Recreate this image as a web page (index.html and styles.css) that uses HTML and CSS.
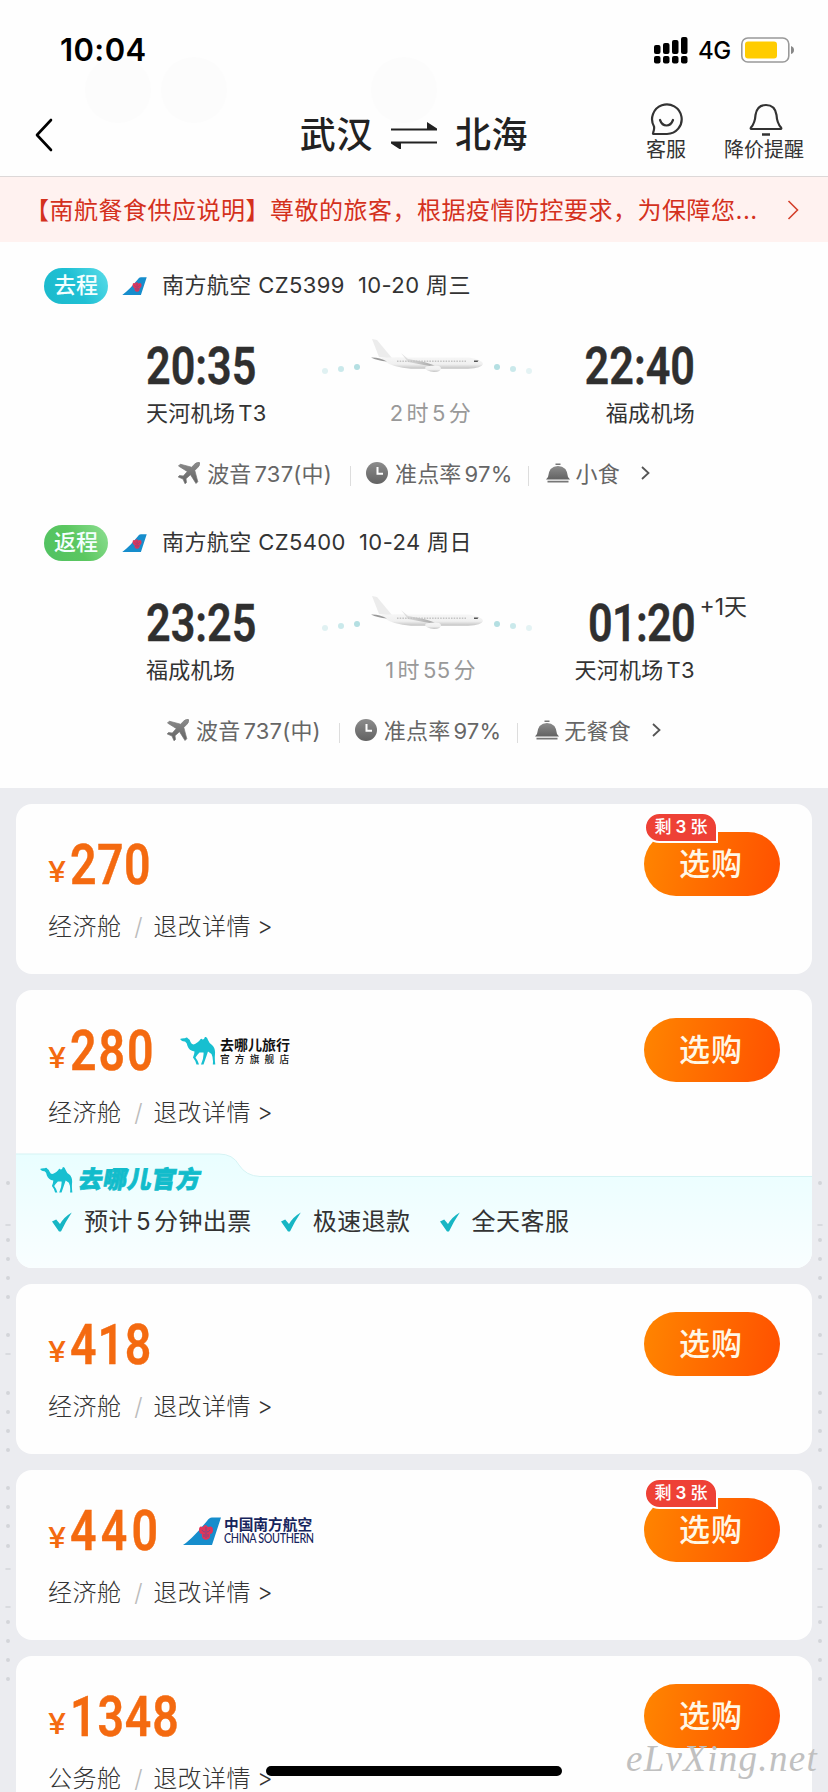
FILE: index.html
```html
<!DOCTYPE html>
<html lang="zh-CN">
<head>
<meta charset="utf-8">
<title>武汉 ⇌ 北海</title>
<link rel="stylesheet" href="styles.css">
</head>
<body>
<svg class="defs" width="0" height="0" aria-hidden="true">
  <defs>
    <linearGradient id="grey" x1="0" y1="0" x2="0" y2="1"><stop offset="0" stop-color="#8c8c8c"/><stop offset="1" stop-color="#626262"/></linearGradient>
    <linearGradient id="hull" x1="0" y1="0" x2="0" y2="1"><stop offset="0" stop-color="#f6f6f6"/><stop offset=".6" stop-color="#f0f0f0"/><stop offset="1" stop-color="#c2c2c2"/></linearGradient>
    <linearGradient id="wing" x1="0" y1="0" x2="1" y2="0"><stop offset="0" stop-color="#e8e8e8"/><stop offset="1" stop-color="#a2a2a2"/></linearGradient>
    <symbol id="tail" viewBox="0 0 38 28">
      <path d="M0 28C9 22 17 12 24 4Q26 .5 29 .5H38L29 28Z" fill="#168dcc"/>
      <path d="M16 13Q16 8 20 10Q22 6 25 10Q30 8 30 13Q30 17 27 17Q28 22 23 23Q18 22 19 17Q16 17 16 13Z" fill="#e0355a"/>
      <path d="M19 13Q20 15 22 15M27 13Q26 15 24 15M23 10V21M21 17V20M25 17V20" fill="none" stroke="#7b4a86" stroke-width="1"/>
    </symbol>
    <symbol id="camel" viewBox="0 0 36 28">
      <path d="M0 2Q2 1 5 1.2Q7-.2 8 1.6Q10 2.5 10.500 5Q12 8.500 15 7Q18 5.500 20 3Q21 1 22.500 2.500Q24 3 25-.2Q27-.2 28 3Q29 6 32 8Q35.500 11 35 17Q34.500 22 35.300 27.500H32.800Q33.500 21 31.500 17L28 14.500Q26.500 19 23.500 27.500H21Q24 21 23.500 15.500H19.500Q17 18 15.500 20.500Q17.500 23 19 27.500H16.500Q15.500 23.500 13 20.500Q14.500 17 14.500 14.500Q9 13.500 7.500 9Q7 5.500 5 4.500Q2 4.800 0 2Z" fill="#17bfd0"/>
    </symbol>
    <symbol id="check" viewBox="0 0 20 20">
      <path d="M0 9.500L4.200 7.500L8 12Q12 5 19.800 .5Q14 9 9 19.500H7Z" fill="#17b6c4"/>
    </symbol>
    <symbol id="jet" viewBox="0 0 22 22">
      <path d="M21.500 .6Q19.500-.4 17 1.800L13.600 5.200L2.300 2.200L.5 4L9.300 9.500L5.300 14L1.500 13.500L.2 15L5 17L7 21.800L8.500 20.500L8 16.700L12.500 12.700L18 21.500L19.800 19.700L16.800 8.400L20.200 5Q22.500 2.500 21.500 .6Z" fill="url(#grey)" stroke="#777" stroke-width=".7"/>
    </symbol>
    <symbol id="clock" viewBox="0 0 22 22">
      <circle cx="11" cy="11" r="11" fill="url(#grey)"/><path d="M11.500 5V11.700H17" fill="none" stroke="#fff" stroke-width="2"/>
    </symbol>
    <symbol id="dish" viewBox="0 0 24 20">
      <path d="M9.500 1.200H14.500M1.500 18.600H22.500" stroke="#777" stroke-width="1.600"/><path d="M2 14Q3 3 12 3Q21 3 22 14L24 16.500H0Z" fill="url(#grey)"/>
    </symbol>
    <symbol id="airliner" viewBox="0 0 230 60">
      <g fill="#b4dfe2"><circle cx="14" cy="46" r="3" opacity=".4"/><circle cx="30" cy="44" r="3" opacity=".7"/><circle cx="46" cy="42" r="3"/><circle cx="186" cy="42" r="3"/><circle cx="202" cy="44" r="3" opacity=".7"/><circle cx="218" cy="46" r="3" opacity=".35"/></g>
      <path d="M61 14L66 15L81 33H76L68 32Z" fill="#ececec"/>
      <path d="M70 33Q82 32 96 32.500H158Q172 35 172 39Q171 43 157 43.800H100Q82 42.500 73 36Z" fill="url(#hull)"/>
      <path d="M60 32.500Q68 32 76 36.500Q66 35.500 60 32.500Z" fill="#999"/>
      <path d="M90 28L97 37Q112 40 125 42Q124 40 113 37L97 34Z" fill="url(#wing)"/>
      <path d="M86 36.300H156" stroke="#c4c4c4" stroke-width="1.500" stroke-dasharray="1.500 1.200"/>
      <path d="M115 41.500Q129 39 130 43Q130 47 123 47Q115 46 114 43Z" fill="url(#hull)"/>
      <path d="M163 35.500H167.500L166.500 37H163Z" fill="#555"/>
    </symbol>
  </defs>
</svg>
<div class="screen">
  <header class="top">
    <div class="status">
      <span class="clock">10:04</span>
      <div class="status-right">
        <svg width="34" height="27" viewBox="0 0 34 27"><rect y="8" width="6.500" height="9" rx="2"/><rect x="9" y="6" width="6.500" height="11" rx="2"/><rect x="18" y="3" width="6.500" height="14" rx="2"/><rect x="27" width="6.500" height="17" rx="2"/><rect y="19" width="6.500" height="7.500" rx="2"/><rect x="9" y="19" width="6.500" height="7.500" rx="2"/><rect x="18" y="19" width="6.500" height="7.500" rx="2"/><rect x="27" y="19" width="6.500" height="7.500" rx="2"/></svg>
        <span class="net">4G</span>
        <svg width="54" height="26" viewBox="0 0 54 26"><rect x=".8" y="1" width="47" height="24" rx="6" fill="none" stroke="#999" stroke-width="1.600"/><rect x="4" y="4.500" width="32" height="17" rx="3" fill="#fc0"/><path d="M50 9Q53 10 53 13Q53 16 50 17Z" fill="#888"/></svg>
      </div>
    </div>
    <div class="nav">
      <svg class="back" width="18" height="34" viewBox="0 0 18 34"><path d="M16 2L2 17L16 32" fill="none" stroke="#000" stroke-width="2.600" stroke-linecap="round" stroke-linejoin="round"/></svg>
      <div class="route"><span>武汉</span><svg width="48" height="28" viewBox="0 0 48 28"><path d="M1 7.500H37V1L47 7.500V9.500H1ZM47 22.500H11V29L1 22.500V20.500H47Z" fill="#222"/></svg><span>北海</span></div>
      <div class="actions">
        <div class="action"><svg width="34" height="33" viewBox="0 0 34 33"><path d="M5 23.500A14.800 14.800 0 1 1 18 31H5Q3.500 31 4.200 29.500Q5.500 26 5 23.500Z" fill="none" stroke="#333" stroke-width="2.200"/><path d="M11 17Q13 22.500 17.500 22.500Q22 22.500 24 17" fill="none" stroke="#333" stroke-width="2.200" stroke-linecap="round"/></svg><span>客服</span></div>
        <div class="action alert"><svg width="34" height="33" viewBox="0 0 34 33"><path d="M3 26Q1 26 2 24.500Q6 20 6.500 12Q8 2 17 2Q26 2 27.500 12Q28 20 32 24.500Q33 26 31 26Z" fill="none" stroke="#333" stroke-width="2.200"/><path d="M13 31.500H21" stroke="#333" stroke-width="2.500"/></svg><span>降价提醒</span></div>
      </div>
    </div>
    <i class="bubble bubble-a"></i><i class="bubble bubble-b"></i><i class="bubble bubble-c"></i>
  </header>

  <div class="notice"><span>【南航餐食供应说明】尊敬的旅客，根据疫情防控要求，为保障您...</span><svg width="12" height="20" viewBox="0 0 12 20"><path d="M1.500 1L10.500 10L1.500 19" fill="none" stroke="#d4412c" stroke-width="1.600"/></svg></div>

  <section class="flights">
    <article class="flight">
      <div class="flight-head"><span class="pill pill-go">去程</span><svg width="25" height="18"><use href="#tail"/></svg><span class="flight-name">南方航空 CZ5399&nbsp; 10-20 周三</span></div>
      <div class="leg">
        <div class="end"><b class="time">20:35</b><span>天河机场<em>T3</em></span></div>
        <div class="mid"><svg width="230" height="60"><use href="#airliner"/></svg><span>2<em></em>时<em>5</em><em></em>分</span></div>
        <div class="end end-right"><b class="time">22:40</b><span>福成机场</span></div>
      </div>
      <div class="info">
        <svg width="22" height="22"><use href="#jet"/></svg><span>波音<em>737(</em>中)</span><i></i>
        <svg width="22" height="22"><use href="#clock"/></svg><span>准点率<em>97%</em></span><i class="sep-meal"></i>
        <svg width="24" height="20"><use href="#dish"/></svg><span class="meal">小食</span>
        <svg class="more" width="9" height="14" viewBox="0 0 9 14"><path d="M1 1L7.500 7L1 13" fill="none" stroke="#555" stroke-width="1.800"/></svg>
      </div>
    </article>
    <article class="flight">
      <div class="flight-head"><span class="pill pill-back">返程</span><svg width="25" height="18"><use href="#tail"/></svg><span class="flight-name">南方航空 CZ5400&nbsp; 10-24 周日</span></div>
      <div class="leg">
        <div class="end"><b class="time">23:25</b><span>福成机场</span></div>
        <div class="mid"><svg width="230" height="60"><use href="#airliner"/></svg><span>1<em></em>时<em>55</em><em></em>分</span></div>
        <div class="end end-right"><b class="time time-tight">01:20</b><span>天河机场<em>T3</em></span><small class="plus-day">+1天</small></div>
      </div>
      <div class="info">
        <svg width="22" height="22"><use href="#jet"/></svg><span>波音<em>737(</em>中)</span><i></i>
        <svg width="22" height="22"><use href="#clock"/></svg><span>准点率<em>97%</em></span><i class="sep-meal"></i>
        <svg width="24" height="20"><use href="#dish"/></svg><span class="meal">无餐食</span>
        <svg class="more" width="9" height="14" viewBox="0 0 9 14"><path d="M1 1L7.500 7L1 13" fill="none" stroke="#555" stroke-width="1.800"/></svg>
      </div>
    </article>
  </section>

  <main class="fares">
    <article class="fare">
      <div class="fare-body">
        <div class="fare-text"><div class="price-row"><span class="price price-narrow"><i>¥</i><b>270</b></span></div><div class="cabin">经济舱<i>/</i>退改详情<em>&gt;</em></div></div>
        <button class="buy">选购<span class="left">剩<b>3</b>张</span></button>
      </div>
    </article>
    <article class="fare fare-official">
      <div class="fare-body">
        <div class="fare-text"><div class="price-row"><span class="price price-mid"><i>¥</i><b>280</b></span>
          <div class="brand qunar"><svg width="36" height="28"><use href="#camel"/></svg><div><strong>去哪儿旅行</strong><span>官方旗舰店</span></div></div></div>
          <div class="cabin">经济舱<i>/</i>退改详情<em>&gt;</em></div></div>
        <button class="buy">选购</button>
      </div>
      <div class="official">
        <svg class="official-bg" width="796" height="116" viewBox="0 0 796 116"><defs><linearGradient id="aqua" x1="0" y1="0" x2="0" y2="1"><stop offset="0" stop-color="#e9feff"/><stop offset="1" stop-color="#f9feff"/></linearGradient></defs><path d="M0 1H203Q217 1 223 12Q230 23 244 23.500H796V116H0Z" fill="url(#aqua)"/><path d="M0 1H203Q217 1 223 12Q230 23 244 23.500H796" fill="none" stroke="#d5f3f4"/></svg>
        <div class="official-title"><svg width="33" height="26"><use href="#camel"/></svg><strong>去哪儿官方</strong></div>
        <div class="perks"><span><svg width="20" height="20"><use href="#check"/></svg>预计<em>5</em><em></em>分钟出票</span><span><svg width="20" height="20"><use href="#check"/></svg>极速退款</span><span><svg width="20" height="20"><use href="#check"/></svg>全天客服</span></div>
      </div>
    </article>
    <article class="fare">
      <div class="fare-body">
        <div class="fare-text"><div class="price-row"><span class="price"><i>¥</i><b>418</b></span></div><div class="cabin">经济舱<i>/</i>退改详情<em>&gt;</em></div></div>
        <button class="buy">选购</button>
      </div>
    </article>
    <article class="fare">
      <div class="fare-body">
        <div class="fare-text"><div class="price-row"><span class="price price-wide"><i>¥</i><b>440</b></span>
          <div class="brand southern"><svg width="38" height="28"><use href="#tail"/></svg><div><strong>中国南方航空</strong><span>CHINA SOUTHERN</span></div></div></div>
          <div class="cabin">经济舱<i>/</i>退改详情<em>&gt;</em></div></div>
        <button class="buy">选购<span class="left">剩<b>3</b>张</span></button>
      </div>
    </article>
    <article class="fare">
      <div class="fare-body">
        <div class="fare-text"><div class="price-row"><span class="price"><i>¥</i><b>1348</b></span></div><div class="cabin">公务舱<i>/</i>退改详情<em>&gt;</em></div></div>
        <button class="buy">选购</button>
      </div>
    </article>
  </main>

  <svg class="edge edge-left" width="16" height="520" viewBox="0 0 16 520"><g id="edge-marks" fill="none" stroke="#d3d5d9" stroke-width="4" stroke-linecap="round"><path d="M8 13h0M8 70h0M8 89h0M8 108h0M8 127h0M8 165h0M8 223h0M8 242h0M8 261h0M8 280h0M8 318h0M8 337h0M8 356h0M8 376h0M8 452h0M8 471h0M8 490h0M8 509h0"/><path d="M6 55h4M6 184h4M6 399h4M6 437h4" stroke-width="1.500"/></g></svg>
  <svg class="edge edge-right" width="16" height="520" viewBox="0 0 16 520"><use href="#edge-marks"/></svg>
  <div class="home-bar"></div>
  <div class="watermark">eLvXing.net</div>
</div>
</body>
</html>
```
FILE: styles.css
```css
* { box-sizing: border-box; }
body { margin: 0; font-family: Inter, "Noto Sans CJK SC", sans-serif; color: #333; background: #ebecf0; }
i, em { font-style: normal; }
svg { display: block; flex: none; }
.defs { position: absolute; }
.screen { position: relative; width: 828px; height: 1792px; overflow: hidden; display: flex; flex-direction: column; background: #ebecf0; }

.top { position: relative; height: 177px; flex: none; background: #fefefe; border-bottom: 1px solid #ddd8d8; }
.status { position: relative; z-index: 1; height: 90px; padding: 20px 33px 0 60px; display: flex; justify-content: space-between; }
.clock { font-size: 31px; line-height: 60px; font-weight: 600; color: #000; letter-spacing: .4px; }
.status-right { display: flex; align-items: center; height: 60px; color: #000; }
.net { font-size: 24px; font-weight: 500; margin: 0 10px 0 10px; letter-spacing: -.3px; }
.nav { position: relative; z-index: 1; height: 86px; display: grid; grid-template-columns: 1fr auto 1fr; align-items: center; padding: 4px 35px 0 35px; }
.route { display: flex; align-items: center; gap: 17px; font-size: 36px; font-weight: 500; line-height: 50px; color: #222; letter-spacing: .6px; }
.actions { display: flex; justify-content: flex-end; align-items: flex-start; gap: 38px; margin: -3px -11px 0 0; }
.action { display: flex; flex-direction: column; align-items: center; font-size: 20px; line-height: 28px; white-space: nowrap; }
.alert svg { margin-left: 4px; }
.bubble { position: absolute; top: 57px; width: 66px; height: 66px; border-radius: 50%; background: #fcfcfc; }
.bubble-a { left: 85px; }
.bubble-b { left: 161px; }
.bubble-c { left: 371px; }

.notice { flex: none; height: 65px; display: flex; align-items: center; justify-content: space-between; padding: 0 29px 0 25px; background: #fff2f0; color: #d4311d; font-size: 24px; letter-spacing: .5px; white-space: nowrap; }
.notice span { margin-top: -2px; }

.flights { flex: none; height: 546px; background: #fefefe; padding-top: 26px; }
.flight { height: 257px; }
.flight-head { height: 36px; padding-left: 44px; display: flex; align-items: center; font-size: 22px; }
.pill { width: 64px; height: 36px; border-radius: 18px; margin-right: 14px; text-align: center; line-height: 35px; color: #f4ffff; font-size: 22px; font-weight: 500; }
.pill-go { background: linear-gradient(60deg, #1bb9cb, #1fc0d4 50%, #5cdde9); }
.pill-back { background: linear-gradient(60deg, #50c162, #5bc760 50%, #8edf92); }
.flight-name { margin: -6px 0 0 15px; letter-spacing: .4px; white-space: pre; }
.leg { height: 130px; padding: 0 133px 0 146px; display: flex; justify-content: space-between; font-size: 22px; }
.end { position: relative; display: flex; flex-direction: column; align-items: flex-start; padding-top: 32px; width: 160px; letter-spacing: .3px; white-space: nowrap; }
.end > span, .mid > span { line-height: 32px; }
.end > span em, .info em { margin-left: 3px; }
.end-right { align-items: flex-end; }
.time { font-family: Roboto, sans-serif; font-weight: 600; font-size: 52px; line-height: 62px; letter-spacing: 0; transform: scaleX(.83); transform-origin: 0 50%; margin-bottom: -1px; color: #2f2f2f; -webkit-text-stroke: .4px #2f2f2f; }
.time-tight { letter-spacing: -.8px; }
.end-right .time { transform-origin: 100% 50%; }
.plus-day { position: absolute; left: 159px; top: 30px; font-size: 23px; line-height: 32px; letter-spacing: 0; }
.mid { display: flex; flex-direction: column; align-items: center; padding-top: 21px; margin-left: 10px; color: #999; letter-spacing: .4px; }
.mid > span { margin: 12px 0 0 10px; }
.mid em { margin-left: 3px; }
.info { height: 78px; display: flex; align-items: center; justify-content: center; color: #666; font-size: 22px; letter-spacing: .2px; white-space: nowrap; }
.info > span { margin: -3px 0 0 7px; }
.info > i { width: 1px; height: 20px; margin: 6px 15px 0 18px; background: #ddd; }
.info > .sep-meal { margin: 6px 17px 0 16px; }
.info > .meal { margin-left: 5px; }
.info .more { margin: -1px 0 0 21px; }

.fares { flex: none; padding: 16px; display: flex; flex-direction: column; gap: 16px; }
.fare { background: #fefefe; border-radius: 16px; }
.fare-body { height: 170px; padding: 28px 32px 0; display: flex; justify-content: space-between; }
.price-row { display: flex; height: 66px; }
.price { display: flex; align-items: baseline; color: #f46a10; line-height: 66px; font-family: Roboto, sans-serif; }
.price i { position: relative; top: -2px; font-family: Inter, sans-serif; font-size: 29px; width: 22px; font-weight: 500; transform: scaleX(1.12); transform-origin: 0 50%; }
.price b { font-size: 56px; font-weight: 600; letter-spacing: 1px; transform: scaleX(.83); transform-origin: 0 50%; -webkit-text-stroke: .4px #f46a10; }
.price-narrow b { letter-spacing: .5px; }
.price-mid b { letter-spacing: 2.300px; }
.price-wide b { letter-spacing: 5px; }
.cabin { display: flex; font-size: 24px; line-height: 36px; margin-top: 11px; font-weight: 300; letter-spacing: .45px; white-space: nowrap; }
.cabin i { margin: 0 10px 0 13px; color: #bbb; }
.cabin em { margin-left: 6px; }
.buy { position: relative; border: 0; padding: 0; width: 136px; height: 64px; border-radius: 32px; background: linear-gradient(100deg, #ff8500, #ff5000); color: #fff8e6; font: 500 31px/62px Inter, "Noto Sans CJK SC", sans-serif; letter-spacing: 1px; text-indent: -2px; }
.left { position: absolute; left: 0; top: -20px; height: 31px; width: 74px; border: 2px solid #fff; border-radius: 16px 16px 0 16px; background: #ee4136; color: #fff; font-size: 17px; line-height: 27px; letter-spacing: 0; text-indent: 0; white-space: nowrap; }
.left b { margin: 0 4px; font-weight: 600; }
.brand { display: flex; align-items: center; height: 30px; margin-top: 18px; white-space: nowrap; }
.brand > div { display: flex; flex-direction: column; }
.qunar { margin-left: 7px; color: #111; }
.qunar > div { margin-left: 4px; }
.qunar strong { font-size: 14px; line-height: 16px; }
.qunar span { font-size: 9.700px; line-height: 13px; letter-spacing: 5.200px; font-weight: 500; }
.southern { margin-left: 2px; color: #16245c; }
.southern > div { margin-left: 3px; }
.southern strong { font-size: 14.700px; line-height: 16px; }
.southern span { font-family: Lato, sans-serif; font-size: 12.500px; line-height: 12px; letter-spacing: -.4px; font-weight: 500; transform: scaleX(.86); transform-origin: 0 50%; width: 90px; }

.fare-official { height: 278px; }
.fare-official .fare-body { height: 162px; }
.official { position: relative; height: 116px; border-radius: 0 0 16px 16px; overflow: hidden; }
.official-bg { position: absolute; left: 0; top: 1px; }
.official-title { position: relative; display: flex; align-items: center; padding: 11px 0 0 24px; height: 45px; color: #12bccb; }
.official-title strong { margin-left: 6px; font-size: 24px; line-height: 30px; font-weight: 900; transform: skewX(-10deg); -webkit-text-stroke: .8px #12bccb; letter-spacing: .4px; }
.perks { position: relative; display: flex; gap: 29px; padding-left: 36px; font-size: 24px; line-height: 49px; letter-spacing: .45px; white-space: nowrap; }
.perks span { display: flex; align-items: center; }
.perks svg { margin-right: 12px; }
.perks em { margin-left: 3px; }

.edge { position: absolute; top: 1170px; }
.edge-left { left: 0; }
.edge-right { right: 0; }
.home-bar { position: absolute; left: 266px; top: 1766px; width: 296px; height: 10px; border-radius: 5px; background: #000; }
.watermark { position: absolute; right: 10px; top: 1737px; font: italic 37px/44px "Liberation Serif", serif; color: #c0c0c0; letter-spacing: 1.300px; }
```
